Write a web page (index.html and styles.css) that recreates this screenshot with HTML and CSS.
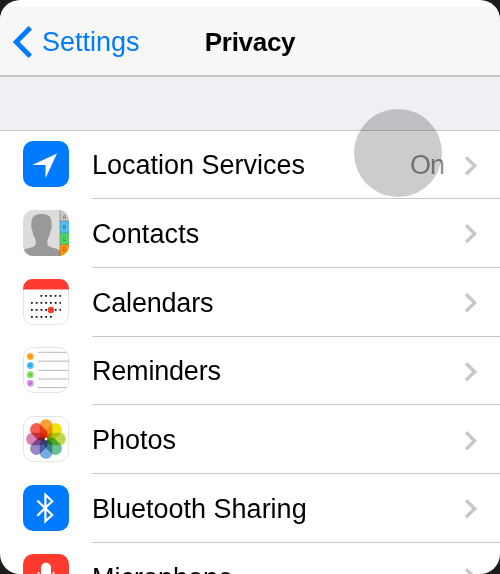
FILE: index.html
```html
<!DOCTYPE html>
<html lang="en">
<head>
<meta charset="utf-8">
<title>Privacy</title>
<link rel="stylesheet" href="styles.css">
</head>
<body>
<svg class="defs" aria-hidden="true"><symbol id="chevron" viewBox="0 0 14 22"><path d="M2 2.2 10.7 10.7 2 19.2" fill="none" stroke="#c7c7cc" stroke-width="3.4"/></symbol></svg>
<main class="screen">
  <div class="status"></div>
  <header class="nav">
    <a class="back"><svg width="20" height="34" viewBox="0 0 20 34"><path d="M18.3 2.8 4.2 17 18.3 31.2" fill="none" stroke="#007aff" stroke-width="4.8"/></svg><span>Settings</span></a>
    <h1>Privacy</h1>
  </header>
  <div class="gap"></div>
  <ul class="list">
    <li class="row">
      <svg class="icon" viewBox="0 0 46 46"><rect width="46" height="46" rx="10" fill="#007aff"/><path d="M34 12.5 9.2 24H22.5V37.3Z" fill="#fff"/></svg>
      <div class="cell"><span class="label">Location Services</span><span class="value">On</span><svg class="chev"><use href="#chevron"/></svg></div>
    </li>
    <li class="row">
      <svg class="icon" viewBox="0 0 46 46"><defs><clipPath id="tile"><rect width="46" height="46" rx="10"/></clipPath></defs>
        <g clip-path="url(#tile)"><rect width="46" height="46" fill="#dcdcdc"/>
        <path d="M0 46V41C3 37.5 10 38 12 35.5 13 34 12.8 31 12.3 28.5 10.5 27 9.8 23 9.4 20.5L8.4 18.8C8.1 9 8.6 4 18.5 4S28.9 9 28.6 18.8L27.6 20.5C27.2 23 26.5 27 24.9 28.5 24.3 31 24 34 25 35.5 27 38 34 37.5 37 41V46Z" fill="#999"/>
        <path d="M37 0h9v11h-9z" fill="#c9c8c1"/><path d="M37 11h9v12h-9z" fill="#55bef0"/><path d="M37 23h9v11.5h-9z" fill="#4cd964"/><path d="M37 34.5h9V46h-9z" fill="#ff9500"/>
        <path d="M37 11h9M37 23h9M37 34.5h9M37 0v46" stroke="#555" stroke-opacity=".55" stroke-width=".8"/>
        <g class="tabs"><text x="41.3" y="9.2">A</text><text x="41.3" y="19.3">B</text><text x="41.3" y="31">C</text><text x="41.3" y="40.6">D</text></g></g></svg>
      <div class="cell"><span class="label wide">Contacts</span><svg class="chev"><use href="#chevron"/></svg></div>
    </li>
    <li class="row">
      <svg class="icon" viewBox="0 0 46 46"><rect x=".5" y=".5" width="45" height="45" rx="10" fill="#fff" stroke="#e4e4e4"/><path d="M0 10.5C0 3 5 0 10 0H36C41 0 46 3 46 10.5Z" fill="#ff3b30"/>
        <path d="M17.4 16.8H38M8 23.8H38M8 30.8H38M8 37.9H29" fill="none" stroke="#111" stroke-width="1.8" stroke-dasharray="1.8 2.95"/><circle cx="27.8" cy="31" r="3.2" fill="#ff3b30"/></svg>
      <div class="cell"><span class="label tight">Calendars</span><svg class="chev"><use href="#chevron"/></svg></div>
    </li>
    <li class="row">
      <svg class="icon" viewBox="0 0 46 46"><rect x=".5" y=".5" width="45" height="45" rx="10" fill="#fff" stroke="#e4e4e4"/>
        <path d="M15 5.3H43.5M15 14.2H46M15 23.3H46M15 32H46M15 40.6H43.5" stroke="#b9b9b9"/>
        <g stroke-width="1.6"><circle cx="7.3" cy="9.6" r="2.7" fill="#ff9500" stroke="#ffad3c"/><circle cx="7.3" cy="18.4" r="2.7" fill="#1badf8" stroke="#59c4fb"/><circle cx="7.3" cy="27.7" r="2.7" fill="#63da38" stroke="#8be46b"/><circle cx="7.3" cy="36.3" r="2.7" fill="#cc73e1" stroke="#da98ea"/></g></svg>
      <div class="cell"><span class="label tight">Reminders</span><svg class="chev"><use href="#chevron"/></svg></div>
    </li>
    <li class="row">
      <svg class="icon" viewBox="0 0 46 46"><rect x=".5" y=".5" width="45" height="45" rx="10" fill="#fff" stroke="#e4e4e4"/>
        <g class="petals" transform="translate(23 23)">
          <rect x="-6.3" y="-19.8" width="12.6" height="19.4" rx="6" fill="#f9a133"/>
          <rect x="-6.3" y="-19.8" width="12.6" height="19.4" rx="6" fill="#f0e20c" transform="rotate(45)"/>
          <rect x="-6.3" y="-19.8" width="12.6" height="19.4" rx="6" fill="#bbdb4c" transform="rotate(90)"/>
          <rect x="-6.3" y="-19.8" width="12.6" height="19.4" rx="6" fill="#69c294" transform="rotate(135)"/>
          <rect x="-6.3" y="-19.8" width="12.6" height="19.4" rx="6" fill="#78ace0" transform="rotate(180)"/>
          <rect x="-6.3" y="-19.8" width="12.6" height="19.4" rx="6" fill="#9988c4" transform="rotate(225)"/>
          <rect x="-6.3" y="-19.8" width="12.6" height="19.4" rx="6" fill="#d583b4" transform="rotate(270)"/>
          <rect x="-6.3" y="-19.8" width="12.6" height="19.4" rx="6" fill="#f35d4f" transform="rotate(315)"/>
        </g><circle cx="23" cy="23" r="1.3" fill="#fff"/></svg>
      <div class="cell"><span class="label">Photos</span><svg class="chev"><use href="#chevron"/></svg></div>
    </li>
    <li class="row">
      <svg class="icon" viewBox="0 0 46 46"><rect width="46" height="46" rx="10" fill="#007aff"/><path d="M14.3 15.5 29.2 30 22.4 36.3V9.7L29.2 16.2 14.3 30.8" fill="none" stroke="#fff" stroke-width="2.2"/></svg>
      <div class="cell"><span class="label">Bluetooth Sharing</span><svg class="chev"><use href="#chevron"/></svg></div>
    </li>
    <li class="row">
      <svg class="icon" viewBox="0 0 46 46"><rect width="46" height="46" rx="10" fill="#ff3b30"/><rect x="18" y="8.7" width="10" height="20" rx="5" fill="#fff"/><path d="M15.5 18V24C15.5 34 30.5 34 30.5 24V18M23 31V37" fill="none" stroke="#fff" stroke-width="1.8"/></svg>
      <div class="cell"><span class="label">Microphone</span><svg class="chev"><use href="#chevron"/></svg></div>
    </li>
  </ul>
</main>
<div class="touch"></div>
</body>
</html>
```
FILE: styles.css
```css
* { box-sizing: border-box; }
body {
  margin: 0;
  height: 574px;
  overflow: hidden;
  background: #1c1c1e;
  font: 27px "Liberation Sans", Arial, sans-serif;
  color: #000;
}
.defs { display: block; width: 0; height: 0; }
.screen {
  height: 574px;
  overflow: hidden;
  border-radius: 20px;
  background: #fff;
}
.status { height: 7px; }
.nav {
  display: grid;
  grid-template-columns: 1fr auto 1fr;
  align-items: center;
  height: 70px;
  padding: 1px 12px 0;
  background: #f7f7f7;
  border-bottom: 2px solid #c4c4c6;
}
.back {
  display: flex;
  align-items: center;
  gap: 10px;
  color: #007aff;
}
.back svg { display: block; }
.back span { padding-top: 1px; }
h1 {
  margin: 0;
  padding-top: 1px;
  font-size: 26px;
  letter-spacing: -.3px;
}
.gap {
  height: 54px;
  background: #efeff4;
  border-bottom: 1px solid #c8c7cc;
}
.list {
  margin: 0;
  padding: 0;
  list-style: none;
}
.row {
  display: flex;
  height: 68.75px;
  padding-left: 23px;
  gap: 23px;
}
.icon {
  flex: none;
  display: block;
  width: 46px;
  height: 46px;
  margin-top: 10px;
}
.cell {
  flex: 1;
  display: flex;
  align-items: center;
  height: 68px;
  padding-top: 2px;
  padding-right: 22px;
  border-bottom: 1px solid #c8c7cc;
}
.label { flex: 1; }
.wide { letter-spacing: .1px; }
.tight { letter-spacing: -.2px; }
.value { color: #8e8e93; margin-right: 20px; letter-spacing: -1px; }
.chev { width: 14px; height: 22px; }
.tabs {
  font-size: 5px;
  text-anchor: middle;
  fill: #555;
}
.petals rect { mix-blend-mode: multiply; }
.petals { isolation: isolate; }
.touch {
  position: absolute;
  left: 354px;
  top: 109px;
  width: 88px;
  height: 88px;
  border-radius: 50%;
  background: rgba(0, 0, 0, .2);
}
```
